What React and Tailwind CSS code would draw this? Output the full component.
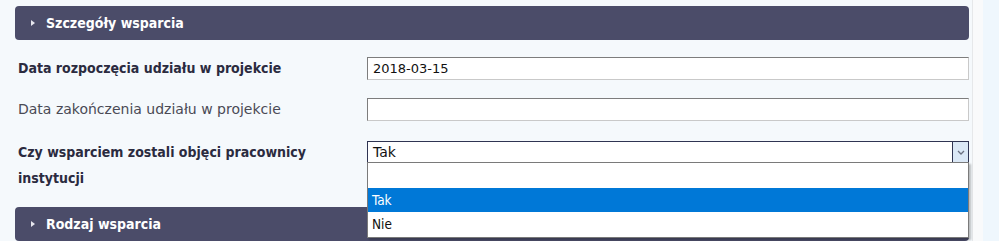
import React from "react";

const font = { fontFamily: '"DejaVu Sans Condensed", "DejaVu Sans", sans-serif' };
const wide = { fontFamily: '"DejaVu Sans", sans-serif' };

function Header({ title }) {
  return (
    <div className="h-[34px] rounded-[4px] bg-[#4b4c69] flex items-center pl-[15px] text-white">
      <svg width="6" height="8" viewBox="0 0 6 8" className="mr-[10px]">
        <path d="M1 1 L5 4 L1 7 Z" fill="#e6e6ee" />
      </svg>
      <span className="font-bold text-[14px]">{title}</span>
    </div>
  );
}

export default function App() {
  return (
    <div className="w-[999px] h-[241px] bg-[#eff7fd] flex overflow-hidden text-[#2c2c3c]" style={font}>
      <div className="w-[972px] h-full bg-[#f5f9fc] pl-[15px] pr-[3px] pt-[6px] relative">
        <Header title="Szczegóły wsparcia" />

        <div className="flex items-center mt-[17px] h-[23px]">
          <div className="w-[352px] pl-[3px] font-bold text-[14px] text-[#2b2b3f]">Data rozpoczęcia udziału w projekcie</div>
          <div className="flex-1 h-[23px] bg-white border border-t-[#7d7d7d] border-l-[#7d7d7d] border-r-[#c9c9c9] border-b-[#c9c9c9] flex items-center pl-[5px] text-[13px] text-[#111]" style={wide}>
            2018-03-15
          </div>
        </div>

        <div className="flex items-center mt-[18px] h-[23px]">
          <div className="w-[352px] pl-[3px] text-[14px] text-[#4a4a55]" style={wide}>Data zakończenia udziału w projekcie</div>
          <div className="flex-1 h-[23px] bg-white border border-t-[#7d7d7d] border-l-[#7d7d7d] border-r-[#c9c9c9] border-b-[#c9c9c9]" />
        </div>

        <div className="flex items-start mt-[20px] h-[58px]">
          <div className="w-[352px] pl-[3px] font-bold text-[14px] leading-[26px] -mt-[2px] text-[#2b2b3f]">
            Czy wsparciem zostali objęci pracownicy
            <br />
            instytucji
          </div>
          <div className="flex-1 relative">
            <div className="h-[22px] bg-white border border-[#2f3452] flex items-center pl-[5px] text-[14px] text-[#111]" style={wide}>
              <span className="flex-1">Tak</span>
              <div className="w-[16px] h-[20px] bg-[#dbe8f6] border-l border-[#2f3452] flex items-center justify-center">
                <svg width="8" height="5" viewBox="0 0 8 5">
                  <path d="M1 1 L4 4 L7 1" stroke="#6b7080" strokeWidth="1.3" fill="none" />
                </svg>
              </div>
            </div>
            <div className="absolute left-0 right-0 top-[21px] z-10 bg-white border border-[#7a7a7a] shadow-[2px_2px_2px_rgba(0,0,0,0.25)] text-[13.5px]">
              <div className="h-[25px]" />
              <div className="h-[24px] bg-[#0078d7] text-white flex items-center pl-[4px]">Tak</div>
              <div className="h-[25px] flex items-center pl-[4px] text-[#111]">Nie</div>
            </div>
          </div>
        </div>

        <div className="mt-[8px]">
          <Header title="Rodzaj wsparcia" />
        </div>
      </div>
      <div className="w-[11px] h-full bg-[#f9fafb] border-l border-[#e6e8ea]" />
    </div>
  );
}
